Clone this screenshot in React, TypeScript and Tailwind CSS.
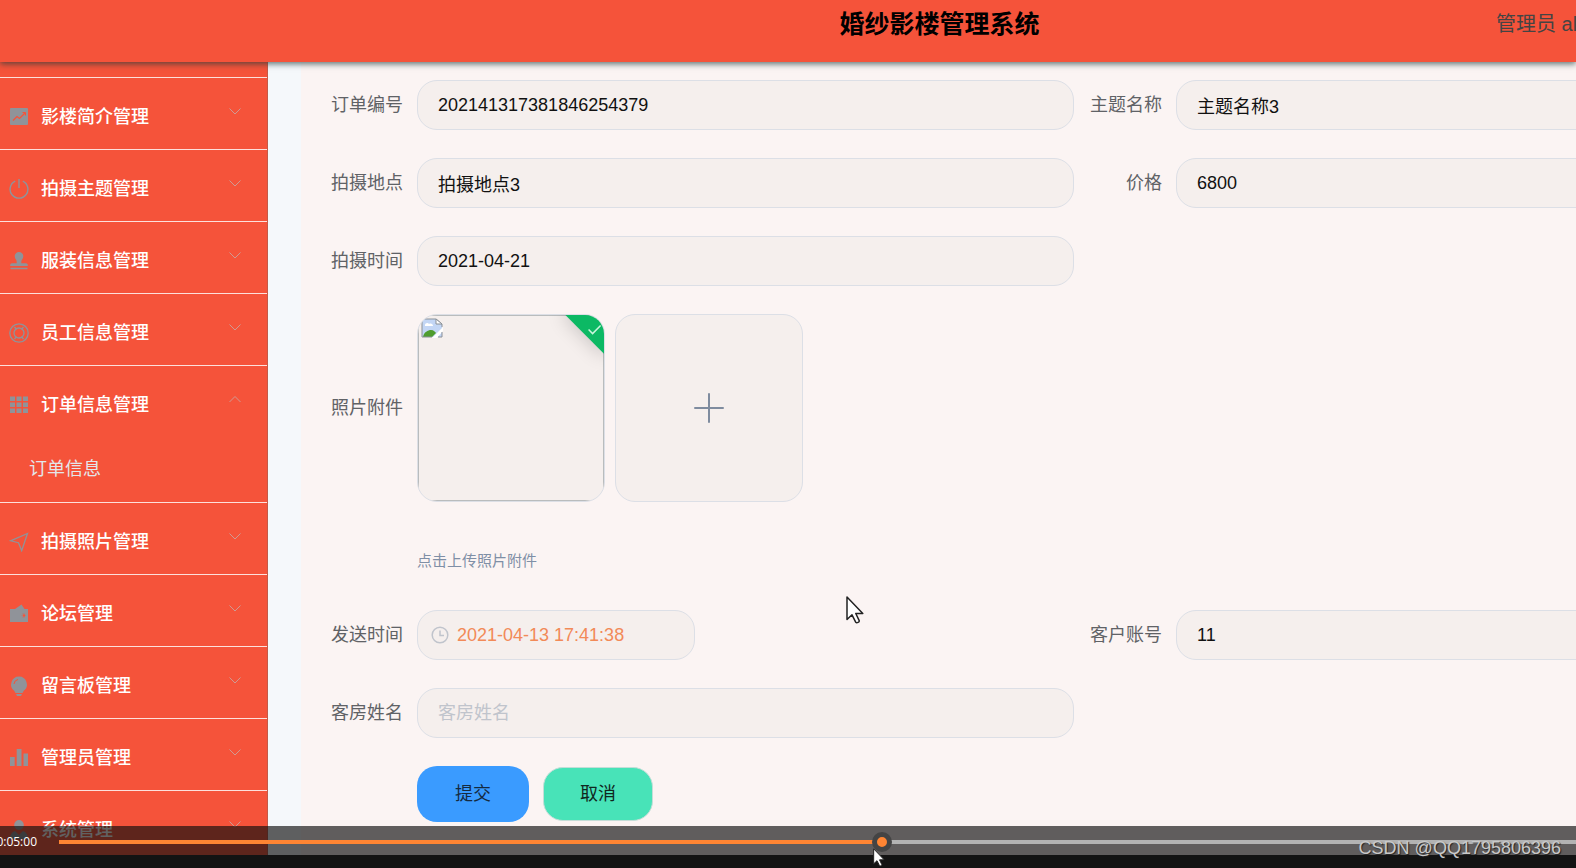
import { ReactNode, useState } from 'react';

interface MenuItem {
  title: string;
  icon: ReactNode;
  children?: string[];
}

interface FieldProps {
  id: string;
  label: string;
  value?: string;
  placeholder?: string;
  className?: string;
}

const menu: MenuItem[] = [
  {
    title: '影楼简介管理',
    icon: (
      <>
        <rect x="1" y="1" width="18" height="17" rx="1" fill="currentColor" />
        <path d="M4 13.500l4-4 2.500 2L16 6" fill="none" stroke="#f5533a" strokeWidth="1.300" />
        <path d="M13.500 5.500h3V8.500" fill="none" stroke="#f5533a" />
      </>
    ),
  },
  {
    title: '拍摄主题管理',
    icon: <path d="M10 0v9M6.200 2.200a8.900 8.900 0 1 0 7.600 0" fill="none" stroke="currentColor" strokeWidth="1.400" />,
  },
  {
    title: '服装信息管理',
    icon: (
      <path
        d="M10 1a4.300 4.300 0 0 1 4.300 4.300c0 2.600-2 3.200-2 5.700v1.200H17c1 0 1.800.8 1.800 1.800v1H1.200v-1c0-1 .8-1.800 1.800-1.800h4.700V11c0-2.500-2-3.100-2-5.700A4.300 4.300 0 0 1 10 1zM1.500 16.800h17v1.400h-17z"
        fill="currentColor"
      />
    ),
  },
  {
    title: '员工信息管理',
    icon: (
      <g fill="none" stroke="currentColor" strokeWidth="1.300">
        <circle cx="10" cy="10" r="9.200" />
        <circle cx="10" cy="10" r="5" />
        <path d="M5.500 4l2 2.200M14.500 4l-2 2.200M5.500 16l2-2.200M14.500 16l-2-2.200" />
      </g>
    ),
  },
  {
    title: '订单信息管理',
    icon: (
      <path
        d="M1 1.500h5v4.500H1zM7.500 1.500h5v4.500h-5zM14 1.500h5v4.500h-5zM1 7.500h5V12H1zM7.500 7.500h5V12h-5zM14 7.500h5V12h-5zM1 13.500h5V18H1zM7.500 13.500h5V18h-5zM14 13.500h5V18h-5z"
        fill="currentColor"
      />
    ),
    children: ['订单信息'],
  },
  {
    title: '拍摄照片管理',
    icon: <path d="M18.500 1.500L1.500 8.800l8 1.900 3.200 8z" fill="none" stroke="currentColor" strokeWidth="1.300" />,
  },
  {
    title: '论坛管理',
    icon: (
      <>
        <path d="M6 5l6.500-4.500L15.500 5zM1 5h17v13H1z" fill="currentColor" />
        <path d="M19 9.300h-4a2.200 2.200 0 0 0 0 4.400h4z" fill="#f5533a" />
        <path d="M19 5v13h-3v-4.300h-1a2.200 2.200 0 0 1 0-4.400h1V5z" fill="currentColor" />
        <circle cx="15" cy="11.500" r="1.300" fill="#f5533a" />
      </>
    ),
  },
  {
    title: '留言板管理',
    icon: (
      <>
        <path d="M10 0.500a8 8 0 0 1 4.800 14.300L13.500 17h-7l-1.300-2.200A8 8 0 0 1 10 0.500zM7 18h6l-1 2H8z" fill="currentColor" />
        <path d="M5 8a5 5 0 0 1 4-4.500" fill="none" stroke="#f5533a" />
      </>
    ),
  },
  {
    title: '管理员管理',
    icon: <path d="M1 9h4.700v9H1zM7.700 1h4.800v17H7.700zM14.500 5.500H19V18h-4.500z" fill="currentColor" />,
  },
  {
    title: '系统管理',
    icon: (
      <path
        d="M10 0a4.800 4.800 0 0 1 4.800 4.800C14.800 8 12.500 10 10 10S5.200 8 5.200 4.800A4.800 4.800 0 0 1 10 0zM6 11l4 4 4-4c3 1 5 3.500 5 8H1c0-4.500 2-7 5-8z"
        fill="currentColor"
      />
    ),
  },
];

const inputStyle =
  'h-[50px] rounded-[20px] border border-[#dcdfe6] bg-[#f5efed] text-lg text-[#111] outline-none placeholder:text-[#c0c4cc]';
const labelStyle = 'w-[100px] shrink-0 pr-3.5 text-right text-lg text-[#606266]';

function Field({ id, label, value, placeholder, className = '' }: FieldProps) {
  return (
    <div className={`flex items-center ${className}`}>
      <label htmlFor={id} className={labelStyle}>
        {label}
      </label>
      <input
        id={id}
        type="text"
        defaultValue={value}
        placeholder={placeholder}
        className={`${inputStyle} min-w-0 flex-1 px-5`}
      />
    </div>
  );
}

function Sidebar() {
  const [open, setOpen] = useState('订单信息管理');

  return (
    <nav className="w-[268px] shrink-0 border-r border-[#c25a48] bg-[#f5533a] pt-[15px]">
      {menu.map((item) => {
        const expanded = open === item.title;
        return (
          <div key={item.title} className="border-t border-[#fde0db]">
            <button
              type="button"
              aria-expanded={expanded}
              onClick={() => setOpen(expanded ? '' : item.title)}
              className="flex h-[71px] w-full items-center pt-1.5 pr-[26px] pl-[9px] text-lg font-medium text-white"
            >
              <svg viewBox="0 0 20 20" className="mr-3 size-5 text-[#909399]">
                {item.icon}
              </svg>
              {item.title}
              <svg viewBox="0 0 12 12" className="mb-3 ml-auto size-3 text-[#cf9a92]">
                <path d={expanded ? 'M0.500 9L6 3.500 11.500 9' : 'M0.500 3.500L6 9l5.500-5.500'} fill="none" stroke="currentColor" />
              </svg>
            </button>
            {expanded &&
              item.children?.map((child) => (
                <a key={child} href="#" className="block h-[65px] pt-[18px] pl-[29px] text-lg leading-7 text-[#e4e7ea]">
                  {child}
                </a>
              ))}
          </div>
        );
      })}
    </nav>
  );
}

function BrokenImage() {
  return (
    <svg viewBox="0 0 22 20" className="absolute top-[3px] left-[3px] h-5 w-[22px]" role="img" aria-label="照片">
      <path d="M1 1h14l6 5v13H1z" fill="#c3d6f5" />
      <path d="M4 7c0-2 3-3 4-1 2-1 4 0 4 2H4z" fill="#fff" />
      <path d="M2 19c1-5 5-7 8-7 3 0 4 2 5 3l-4 4z" fill="#4f9d2f" />
      <path d="M11 20L22 9v4l-6 7z" fill="#fff" />
      <path d="M11 19H1V1h14l6 5v3M21 14v5h-4" fill="none" stroke="#8b9198" />
      <path d="M15 1v5h6z" fill="#fff" stroke="#8b9198" />
    </svg>
  );
}

function Upload() {
  return (
    <div className="col-span-2">
      <div className="flex items-center">
        <span className={labelStyle}>照片附件</span>
        <div className="flex gap-2.5">
          <div className="relative size-[188px] overflow-hidden rounded-[20px] border border-[#dcdfe6] bg-[#f5efed]">
            <div className="h-full border border-[#b9bcbd]" />
            <BrokenImage />
            <div className="absolute -top-2 -right-5 flex h-8 w-14 rotate-45 items-center justify-center bg-[#0cb964] shadow-[0_0_20px_1px_rgba(0,0,0,0.2)]">
              <svg viewBox="0 0 14 12" className="mt-3 ml-2 h-3 w-3.5 -rotate-45">
                <path d="M1 5.500l4 4L13 1.500" fill="none" stroke="#c9f5dc" strokeWidth="1.500" />
              </svg>
            </div>
          </div>
          <button
            type="button"
            aria-label="上传照片"
            className="flex size-[188px] items-center justify-center rounded-[20px] border border-[#dcdfe6] bg-[#f5efed] text-[#7f8c9f]"
          >
            <svg viewBox="0 0 30 30" className="size-[30px]">
              <path d="M15 1v28M1 15h28" stroke="currentColor" strokeWidth="2" strokeLinecap="round" />
            </svg>
          </button>
        </div>
      </div>
      <p className="mt-12 mb-2.5 ml-[100px] text-[15px] leading-[22px] text-[#7f8fa6]">点击上传照片附件</p>
    </div>
  );
}

function OrderForm() {
  return (
    <form
      onSubmit={(e) => e.preventDefault()}
      className="grid grid-cols-[757fr_500fr] gap-x-0.5 gap-y-7 pt-[18px] pl-4"
    >
      <Field id="orderNo" label="订单编号" value="202141317381846254379" />
      <Field id="theme" label="主题名称" value="主题名称3" className="-mr-8" />
      <Field id="place" label="拍摄地点" value="拍摄地点3" />
      <Field id="price" label="价格" value="6800" className="-mr-8" />
      <Field id="shootDate" label="拍摄时间" value="2021-04-21" className="col-start-1" />
      <Upload />
      <div className="flex items-center">
        <label htmlFor="sendTime" className={labelStyle}>
          发送时间
        </label>
        <div className="relative">
          <svg viewBox="0 0 18 18" className="absolute top-4 left-3.5 size-[18px] text-[#c0c4cc]">
            <circle cx="9" cy="9" r="7.800" fill="none" stroke="currentColor" strokeWidth="1.500" />
            <path d="M9 4.500V9.500h4" fill="none" stroke="currentColor" strokeWidth="1.500" />
          </svg>
          <input
            id="sendTime"
            type="text"
            defaultValue="2021-04-13 17:41:38"
            className={`${inputStyle} w-[278px] pr-5 pl-[39px] text-[#f28a58]!`}
          />
        </div>
      </div>
      <Field id="account" label="客户账号" value="11" className="-mr-8" />
      <Field id="guest" label="客房姓名" placeholder="客房姓名" className="col-start-1" />
      <div className="col-span-2 ml-[100px] flex items-center gap-3.5">
        <button type="submit" className="h-14 w-28 rounded-[20px] bg-[#3a9bff] text-lg text-[#152a3f]">
          提交
        </button>
        <button
          type="button"
          className="h-[54px] w-[110px] rounded-[20px] border border-[#c4ded8] bg-[#48e3b8] text-lg text-[#10281f]"
        >
          取消
        </button>
      </div>
    </form>
  );
}

function Pointer({ className }: { className: string }) {
  return (
    <svg viewBox="0 0 18 28" className={`pointer-events-none absolute ${className}`}>
      <path
        d="M1 1v22.500l5-4.700 3.800 7.500c1 1 3.800-.300 3.400-1.700L9.800 17.500h7z"
        fill="#fff"
        stroke="#222"
        strokeWidth="1.500"
        strokeLinejoin="round"
      />
    </svg>
  );
}

function PlayerControls() {
  return (
    <div className="absolute inset-x-0 bottom-0 flex h-[29px] items-center overflow-hidden bg-[#0c0c0c]/65 pt-[3px]">
      <time className="flex w-[59px] shrink-0 justify-end pr-[22px] font-['Open_Sans','Noto_Sans',sans-serif] text-xs text-white">
        0:05:00
      </time>
      <input
        type="range"
        aria-label="播放进度"
        min={0}
        max={1000}
        defaultValue={543}
        className="h-5 min-w-0 flex-1 appearance-none bg-transparent [&::-webkit-slider-runnable-track]:h-1 [&::-webkit-slider-runnable-track]:bg-[linear-gradient(to_right,#ff8533_54%,#b3b3b3_54%)] [&::-webkit-slider-thumb]:-mt-2 [&::-webkit-slider-thumb]:size-5 [&::-webkit-slider-thumb]:appearance-none [&::-webkit-slider-thumb]:rounded-full [&::-webkit-slider-thumb]:border-5 [&::-webkit-slider-thumb]:border-[#444] [&::-webkit-slider-thumb]:bg-[#ff8533]"
      />
    </div>
  );
}

export default function App() {
  return (
    <div className="relative flex h-screen flex-col overflow-hidden bg-[#131313] font-['Liberation_Sans','Noto_Sans_CJK_SC',sans-serif]">
      <div className="relative flex min-h-0 flex-1 flex-col overflow-hidden">
        <header className="relative flex h-[62px] shrink-0 bg-[#f5533a] pt-1.5 pl-[383px] shadow-[0_2px_6px_rgba(30,60,60,0.7)]">
          <h1 className="flex-1 text-center text-[25px] leading-9 font-bold text-black">婚纱影楼管理系统</h1>
          <div className="w-20 overflow-hidden text-xl leading-9 whitespace-nowrap text-[#444]">管理员 ab</div>
        </header>
        <div className="flex min-h-0 flex-1">
          <Sidebar />
          <main className="min-w-0 flex-1 overflow-hidden bg-[#f5f8fb] pl-[33px]">
            <div className="h-full bg-[#fbf4f3]">
              <OrderForm />
            </div>
          </main>
        </div>
        <PlayerControls />
      </div>
      <div className="h-[13px] shrink-0" />
      <Pointer className="top-[596px] left-[846px] h-7 w-[18px]" />
      <Pointer className="top-[848px] left-[873px] h-[19px] w-3" />
      <div className="absolute right-[15px] bottom-2 text-lg leading-6 text-[#c9c9c9] [text-shadow:1px_1px_1px_#222]">
        CSDN @QQ1795806396
      </div>
    </div>
  );
}
